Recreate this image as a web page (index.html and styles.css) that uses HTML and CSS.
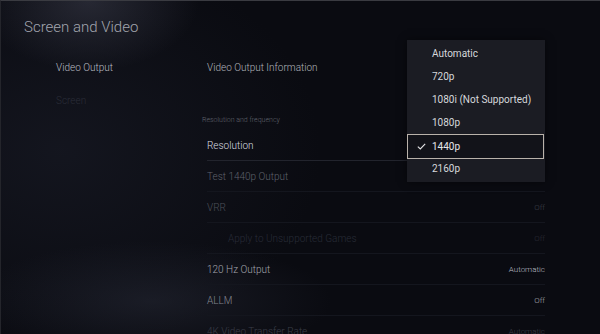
FILE: index.html
```html
<!DOCTYPE html>
<html lang="en">
<head>
  <meta charset="UTF-8" />
  <meta name="viewport" content="width=device-width, initial-scale=1.0"/>
  <title>Screen and Video</title>
  <link rel="stylesheet" href="styles.css">
</head>
<body>

  <div class="screen">
    <h1 class="title">Screen and Video</h1>

    <div class="columns">
      <!-- Left menu -->
      <ul class="side-nav">
        <li class="nav-item">Video Output</li>
        <li class="nav-item dim">Screen</li>
      </ul>

      <!-- Settings list -->
      <div class="settings">
        <div class="row info">Video Output Information</div>

        <div class="group-label">Resolution and frequency</div>

        <div class="row focus"><span>Resolution</span></div>
        <div class="row muted"><span>Test 1440p Output</span></div>
        <div class="row vrr"><span>VRR</span><span class="value">Off</span></div>
        <div class="row sub"><span>Apply to Unsupported Games</span><span class="value">Off</span></div>
        <div class="row hz"><span>120 Hz Output</span><span class="value">Automatic</span></div>
        <div class="row allm"><span>ALLM</span><span class="value">Off</span></div>
        <div class="row faded"><span>4K Video Transfer Rate</span><span class="value">Automatic</span></div>
      </div>
    </div>

    <!-- Resolution dropdown -->
    <ul class="dropdown">
      <li>Automatic</li>
      <li>720p</li>
      <li>1080i (Not Supported)</li>
      <li>1080p</li>
      <li class="selected">
        <svg class="check" width="9" height="7" viewBox="0 0 9 7">
          <path d="M0.8 3.6 L3.3 6 L8.2 0.8" fill="none" stroke="#e4e4e6" stroke-width="1.1"/>
        </svg>
        1440p
      </li>
      <li>2160p</li>
    </ul>
  </div>

</body>
</html>
```

FILE: styles.css
```css
:root {
  --bg: #0a0b11;
  --menu: #1b1c23;
  --text: #d4d6da;
  --line: #14161e;
}

* {
  margin: 0;
  padding: 0;
  box-sizing: border-box;
}

body {
  width: 600px;
  height: 334px;
  overflow: hidden;
  background: var(--bg);
  font-family: Roboto, 'Noto Sans', sans-serif;
  font-weight: 300;
  color: var(--text);
}

.screen {
  position: relative;
  width: 600px;
  height: 334px;
  border-top: 1px solid #3a3b41;
  border-left: 1px solid #24252b;
  background:
    radial-gradient(ellipse 110px 70px at 88px 0, rgba(70, 72, 88, 0.45), rgba(70, 72, 88, 0) 100%),
    radial-gradient(ellipse 180px 60px at 150px 300px, rgba(40, 43, 56, 0.5), rgba(40, 43, 56, 0) 100%),
    radial-gradient(ellipse 260px 200px at 60px 150px, rgba(22, 24, 34, 0.8), rgba(22, 24, 34, 0) 100%),
    var(--bg);
}

.title {
  padding: 16px 0 0 23px;
  font-size: 15px;
  font-weight: 300;
  line-height: 20px;
  color: #a2a5ae;
}

.columns {
  display: flex;
  margin-top: 15px;
}

ul {
  list-style: none;
}

.side-nav {
  width: 206px;
  padding-left: 55px;
}

.nav-item {
  height: 33px;
  line-height: 31px;
  font-size: 10px;
  color: #b8bbc2;
}

.nav-item.dim {
  color: #2a2d38;
}

.settings {
  width: 338px;
}

.row {
  display: flex;
  justify-content: space-between;
  align-items: center;
  height: 31px;
  font-size: 10px;
  border-bottom: 1px solid var(--line);
}

.row .value {
  font-size: 8px;
}

.row.info {
  border-bottom: none;
  color: #b0b3ba;
}

.group-label {
  margin: 31px 0 4px -5px;
  height: 12px;
  line-height: 12px;
  font-size: 7px;
  color: #60636d;
}

.row.focus {
  color: #dcdee2;
  border-bottom-color: #22242d;
}

.row.muted {
  color: #5e616b;
}

.row.vrr {
  color: #4c4f59;
}

.row.vrr .value {
  color: #3d4049;
}

.row.sub {
  padding-left: 21px;
  color: #282b37;
}

.row.sub .value {
  color: #2a2c36;
}

.row.hz {
  color: #a2a5ad;
}

.row.hz .value {
  color: #bcbfc6;
}

.row.allm {
  color: #83868f;
}

.row.allm .value {
  color: #a8abb3;
}

.row.faded {
  color: #3a3d47;
}

.dropdown {
  position: absolute;
  left: 406px;
  top: 39px;
  width: 138px;
  height: 142px;
  padding: 2px 0;
  background: var(--menu);
  box-shadow: 0 0 8px rgba(0, 0, 0, 0.5);
}

.dropdown li {
  position: relative;
  height: 23px;
  line-height: 23px;
  padding-left: 25px;
  font-size: 10px;
  font-weight: 400;
  color: #d6d8dc;
}

.dropdown li.selected {
  height: 25px;
  line-height: 23px;
  margin: 0 1px -2px 0;
  border: 1px solid #b9b2aa;
  padding-left: 24px;
  background: #121319;
  color: #e6e7ea;
}

.check {
  position: absolute;
  left: 9px;
  top: 8px;
}
```
